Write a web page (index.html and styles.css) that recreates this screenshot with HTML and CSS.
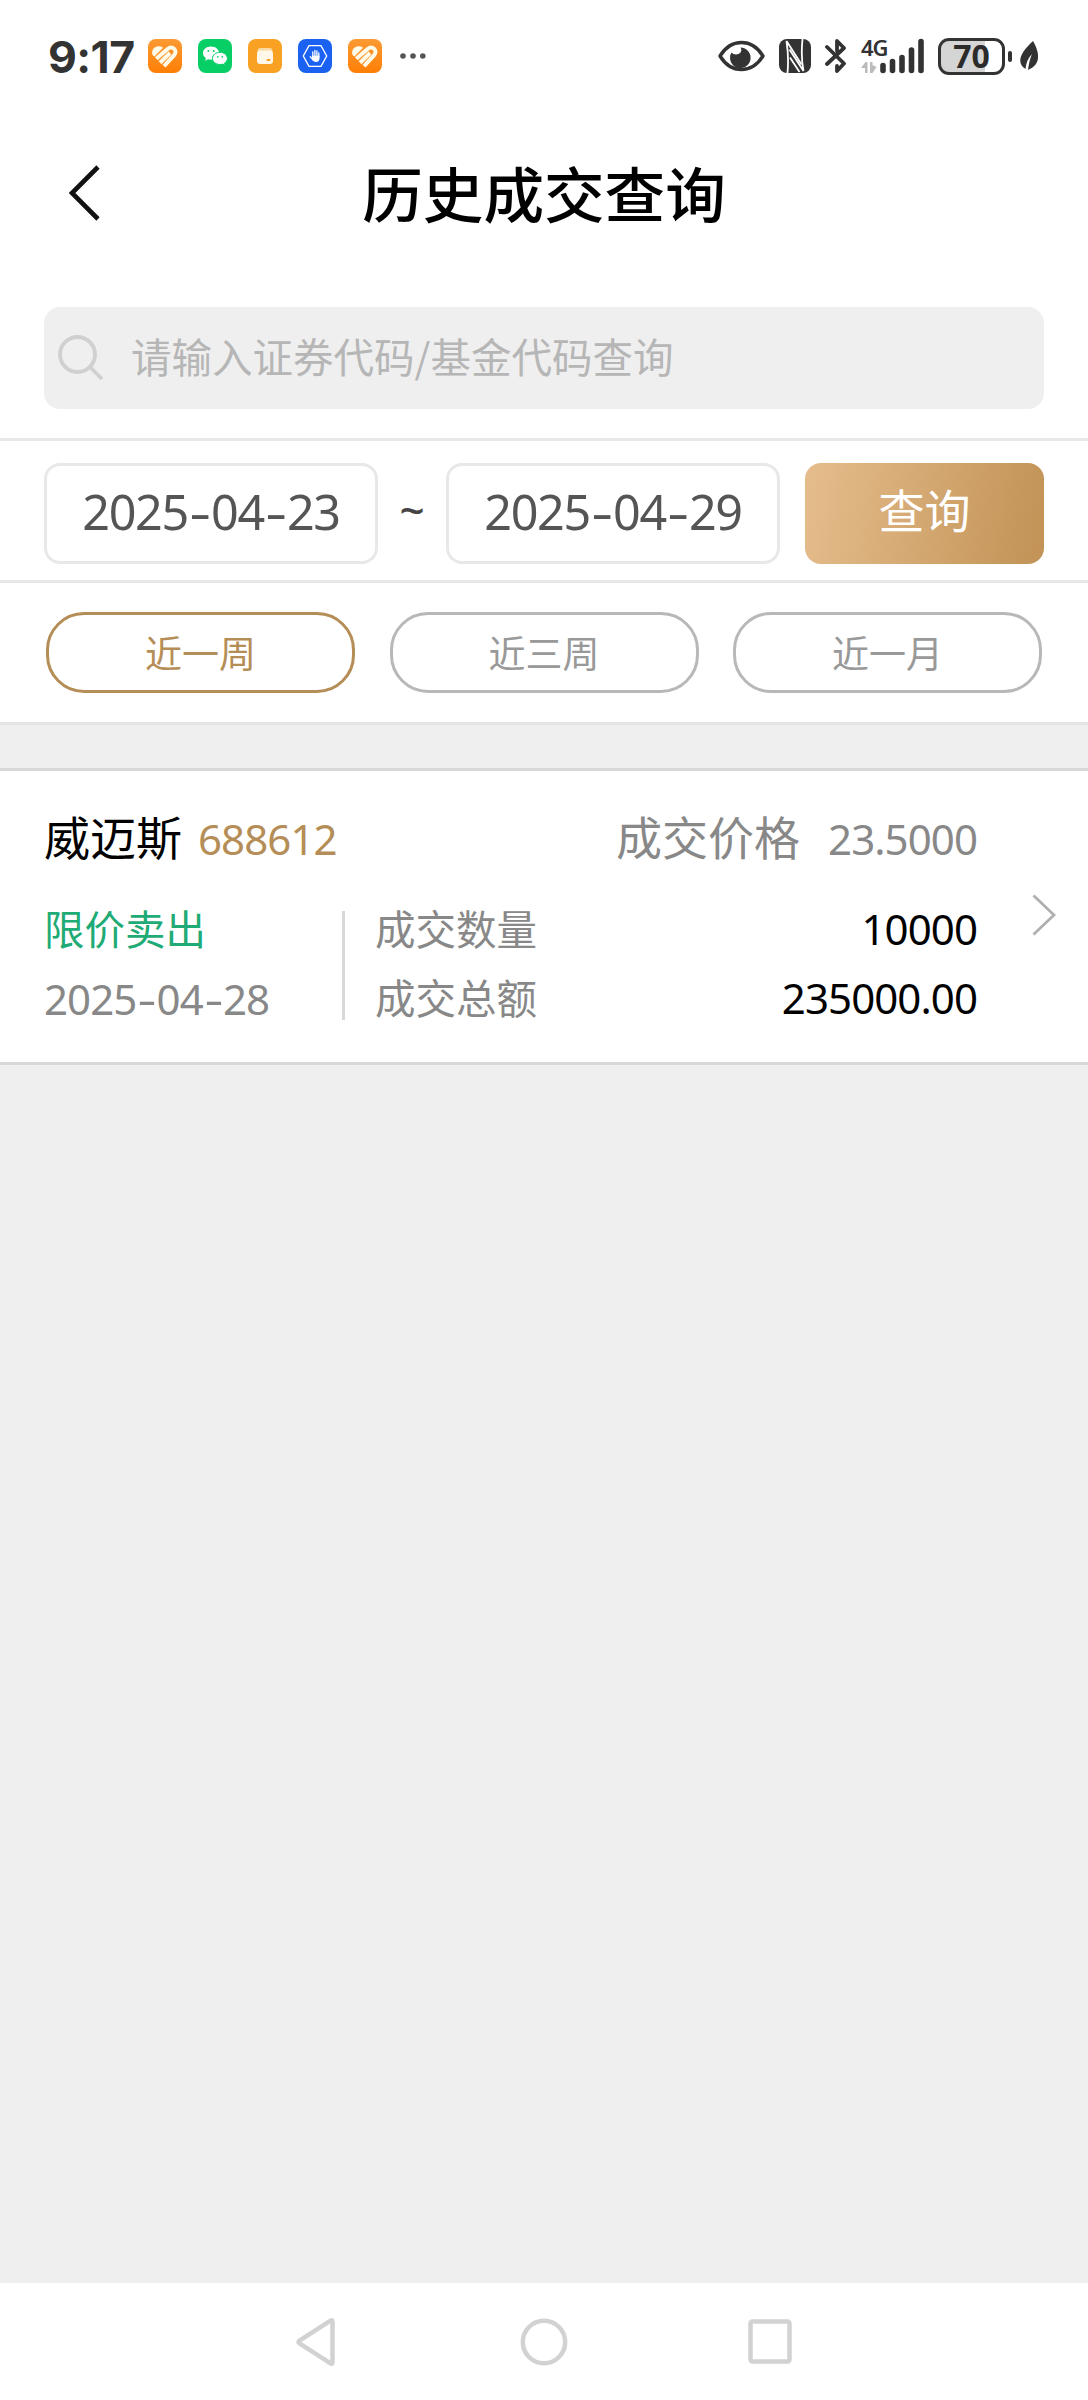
FILE: index.html
```html
<!DOCTYPE html>
<html lang="zh-CN">
<head>
<meta charset="utf-8">
<title>历史成交查询</title>
<link rel="stylesheet" href="styles.css">
</head>
<body>
<div class="status">
  <span class="clock">9:17</span>
  <div class="apps">
    <svg class="app" viewBox="0 0 34 34"><defs><linearGradient id="og" x1="0" y1="0" x2="0" y2="1"><stop offset="0" stop-color="#fb9a33"/><stop offset="1" stop-color="#fe7f05"/></linearGradient></defs><rect width="34" height="34" rx="8" fill="url(#og)"/><path d="M4.500 16C2.500 9.500 9 4.800 15 8.800L6.500 17.500Z" fill="#fffbe8"/><g fill="none" stroke="#fffbe8" stroke-width="4"><path d="M8.300 19.800L19.300 10.200C24.500 6 30.300 11.500 26 16.300L16 27.200"/><path d="M12 23.800L22 14"/></g></svg>
    <svg class="app" viewBox="0 0 34 34"><rect width="34" height="34" rx="8" fill="#07cf66"/><path d="M13 7.500c-4.600 0-8 2.900-8 6.600 0 2.100 1.100 3.900 2.900 5.100l-.8 2.600 3-1.500c1 .3 2 .4 3 .4 4.500 0 8-2.900 8-6.600s-3.500-6.600-8.100-6.600z" fill="#fff"/><path d="M22 13.300c-4.200 0-7.500 2.700-7.500 6.100s3.300 6.100 7.500 6.100c.9 0 1.800-.1 2.600-.4l2.600 1.300-.7-2.300c1.800-1.100 2.900-2.800 2.900-4.700 0-3.400-3.300-6.100-7.400-6.100z" fill="#fff" stroke="#07cf66" stroke-width="1"/><g fill="#07cf66"><circle cx="10.300" cy="12" r="1"/><circle cx="15.700" cy="12" r="1"/><circle cx="19.800" cy="17.800" r=".9"/><circle cx="24.300" cy="17.800" r=".9"/></g></svg>
    <svg class="app" viewBox="0 0 34 34"><rect width="34" height="34" rx="8" fill="#f8a123"/><path d="M9.500 12c0-2 1-3 3-3h9c2 0 3 1 3 3z" fill="#fcd9a0"/><rect x="9" y="11.500" width="16" height="13.500" rx="3" fill="#fff8e8"/><rect x="18.500" y="20" width="4" height="2" rx="1" fill="#f8a123"/></svg>
    <svg class="app" viewBox="0 0 34 34"><rect width="34" height="34" rx="8" fill="#1c62f2"/><path d="M11 6.700h12L28.700 17 23 27.300H11L5.300 17z" fill="none" stroke="#fff" stroke-width="1.300"/><path d="M14.800 18v-5M16.900 17v-5.500M18.900 17v-5M20.800 18v-4M12.300 17.800l2.700 3" stroke="#fff" stroke-width="1.300" stroke-linecap="round" fill="none"/><path d="M14.200 16.800h7.300v2.700c0 4.500-6 4.500-7.300 1z" fill="#fff"/></svg>
    <svg class="app" viewBox="0 0 34 34"><rect width="34" height="34" rx="8" fill="url(#og)"/><path d="M4.500 16C2.500 9.500 9 4.800 15 8.800L6.500 17.500Z" fill="#fffbe8"/><g fill="none" stroke="#fffbe8" stroke-width="4"><path d="M8.300 19.800L19.300 10.200C24.500 6 30.300 11.500 26 16.300L16 27.200"/><path d="M12 23.800L22 14"/></g></svg>
  </div>
  <svg class="dots" viewBox="0 0 26 6" fill="#555"><circle cx="3" cy="3" r="2.800"/><circle cx="13" cy="3" r="2.800"/><circle cx="22.800" cy="3" r="2.800"/></svg>
  <div class="signals">
    <svg class="eye" viewBox="0 0 47 32"><path d="M2 16C13-2 34-2 45 16 34 34 13 34 2 16z" fill="none" stroke="#333" stroke-width="3.400" stroke-linejoin="round"/><path d="M22.500 7.500a10.300 10.300 0 1 1-9 5c2 2.500 7 2.500 9 0 1.200-1.600 1-3.500 0-5z" fill="#333"/></svg>
    <svg class="nfc" viewBox="0 0 32 34"><rect width="32" height="34" rx="8" fill="#333"/><g fill="none" stroke="#fff" stroke-width="1.800"><path d="M8.500 34C9.500 24 9 12 7.500 2L22.500 25.500"/><path d="M10.500 10.500L24.500 32C22.500 22 22.500 10 23.500 0"/><path d="M11 18.500L20.500 33"/></g></svg>
    <svg class="bt" viewBox="0 0 22 36" fill="none" stroke="#333" stroke-width="3.800" stroke-linejoin="round" stroke-linecap="round"><path d="M2 9L19 25.500 12 33V28M12 13V3l7 7L2 26"/></svg>
    <div class="cell">
      <span class="net">4G</span>
      <svg viewBox="0 0 64 36"><g fill="#bbb"><path d="M0 30l4.500-6h2v11H4v-5zM9 24h2.500v3l4 2-4 6H9z"/></g><g stroke="#333" stroke-width="5.600" stroke-linecap="round"><path d="M22 27.500v5M31.500 23.500v9M41 19.500v13M50.500 12v20.500M60 3.500v29"/></g></svg>
    </div>
    <div class="battery"><span>70</span></div>
    <div class="nub"></div>
    <svg class="leaf" viewBox="0 0 18 30"><path d="M13 0C20 12 21 24 8 29 9 22 10 18 12 13 8 17 6 22 5.500 28-4 22 0 12 13 0z" fill="#333"/></svg>
  </div>
</div>
<header class="top">
  <svg class="back" viewBox="0 0 32 56"><path d="M29 2L3 28l26 26" fill="none" stroke="#111" stroke-width="4.600"/></svg>
  <h1>历史成交查询</h1>
</header>
<div class="search">
  <svg viewBox="0 0 46 46" fill="none" stroke="#d0d0d0" stroke-width="3.800"><circle cx="19.500" cy="19.500" r="17.500"/><path d="M32 32L44 44"/></svg>
  <span>请输入证券代码/基金代码查询</span>
</div>
<div class="range">
  <div class="date">2025<i>-</i>04<i>-</i>23</div>
  <span class="tilde">~</span>
  <div class="date">2025<i>-</i>04<i>-</i>29</div>
  <div class="go">查询</div>
</div>
<div class="periods">
  <div class="pill on">近一周</div>
  <div class="pill">近三周</div>
  <div class="pill">近一月</div>
</div>
<main>
  <div class="deal">
    <div class="info">
      <div class="head">
        <span class="name">威迈斯</span><span class="code">688612</span>
        <span class="plabel">成交价格</span><span class="price">23.5000</span>
      </div>
      <div class="body">
        <div class="kind"><span class="sell">限价卖出</span><span class="day">2025<i>-</i>04<i>-</i>28</span></div>
        <div class="nums">
          <div><span>成交数量</span><b>10000</b></div>
          <div><span>成交总额</span><b>235000.00</b></div>
        </div>
      </div>
    </div>
    <svg class="more" viewBox="0 0 24 42"><path d="M1.500 1.500L22 21 1.500 40.500" fill="none" stroke="#b0b0b0" stroke-width="2.800"/></svg>
  </div>
</main>
<nav>
  <svg viewBox="0 0 48 48"><path d="M38.500 3.500v41q0 2-2 .8L5.500 25.500q-2-1.500 0-3L36.500 2.700q2-1.200 2 .8z"/></svg>
  <svg viewBox="0 0 48 48"><circle cx="24" cy="24" r="21.200"/></svg>
  <svg viewBox="0 0 48 48"><rect x="4.500" y="3.500" width="39" height="40" rx="2"/></svg>
</nav>
</body>
</html>
```
FILE: styles.css
```css
* { box-sizing: border-box; }
body {
  margin: 0;
  width: 1088px;
  height: 2400px;
  display: flex;
  flex-direction: column;
  background: #fff;
  font-family: "Noto Sans CJK SC", sans-serif;
  color: #000;
  overflow: hidden;
}
svg { display: block; flex: none; }
i { font-style: normal; }

.status {
  height: 112px;
  display: flex;
  align-items: center;
  padding-left: 48px;
}
.clock {
  width: 100px;
  padding-top: 2px;
  font: 700 44.500px/44px Inter, sans-serif;
  letter-spacing: -.6px;
  color: #333;
}
.apps { display: flex; gap: 16px; }
.app { width: 34px; height: 34px; }
.dots { width: 26px; height: 6px; margin-left: 18px; }
.signals { display: flex; align-items: center; margin-left: 292px; }
.eye { width: 47px; height: 32px; }
.nfc { width: 32px; height: 34px; margin-left: 14px; }
.bt { width: 22px; height: 36px; margin-left: 14px; }
.cell { width: 64px; height: 36px; margin-left: 14px; position: relative; }
.cell svg { width: 64px; height: 36px; }
.net {
  position: absolute;
  left: 0;
  top: -1px;
  font: 600 22px/20px "Noto Sans", sans-serif;
  letter-spacing: -1px;
  color: #333;
}
.battery {
  width: 67px;
  height: 37px;
  margin-left: 13px;
  border: 3px solid #333;
  border-radius: 11px;
  background: linear-gradient(90deg, #d5d5d5 44px, #fff 44px);
  font: 700 32px/29px "Noto Sans", sans-serif;
  text-align: center;
  color: #2b2b2b;
}
.nub { width: 4px; height: 11px; margin-left: 3px; border-radius: 2px; background: #333; }
.leaf { width: 18px; height: 30px; margin-left: 8px; }

.top {
  height: 195px;
  padding: 51px 69px 0;
  display: grid;
  grid-template-columns: 32px 1fr 32px;
  align-items: start;
}
.back { width: 32px; height: 56px; margin-top: 2px; }
h1 { margin: -1px 0 0; font-weight: 500; font-size: 60.600px; line-height: 60px; text-align: center; }

.search {
  height: 102px;
  margin: 0 44px 29px;
  padding-left: 14px;
  border-radius: 16px;
  background: #efefef;
  display: flex;
  align-items: center;
  gap: 27px;
}
.search svg { width: 46px; height: 46px; }
.search span { font-size: 40.500px; line-height: 60px; padding-bottom: 4px; color: #b6b6b6; }

.range {
  height: 145px;
  border-top: 3px solid #e8e8e8;
  border-bottom: 3px solid #e8e8e8;
  padding: 22px 44px 0;
  display: flex;
}
.date {
  width: 334px;
  height: 101px;
  border: 3px solid #e8e8e8;
  border-radius: 16px;
  text-align: center;
  font: 400 48.500px/91px "Noto Sans", sans-serif;
  letter-spacing: -.027em;
  color: #555;
}
.date i, .day i { display: inline-block; margin: 0 .09em; transform: scaleX(1.4); }
.tilde { width: 68px; text-align: center; font: 500 44px/93px "Noto Sans", sans-serif; color: #444; }
.go {
  width: 239px;
  height: 101px;
  margin-left: auto;
  border-radius: 16px;
  background: linear-gradient(100deg, #e5bd8c, #c29256);
  color: #fff;
  text-align: center;
  font-size: 46px;
  line-height: 91px;
}

.periods {
  height: 142px;
  border-bottom: 3px solid #e5e5e5;
  padding: 29px 46px 0;
  display: flex;
  justify-content: space-between;
}
.pill {
  width: 309px;
  height: 81px;
  border: 3px solid #b8b8b8;
  border-radius: 38px;
  text-align: center;
  font-size: 37px;
  line-height: 74px;
  color: #999;
}
.pill.on { border-color: #b58e57; color: #b58e57; }

main { flex: 1; padding-top: 43px; background: #efefef; }
.deal {
  height: 297px;
  border-top: 3px solid #d8d8d8;
  border-bottom: 3px solid #d8d8d8;
  background: #fff;
  padding: 34px 32px 0 44px;
  display: flex;
}
.info { width: 933px; }
.head { display: flex; align-items: baseline; height: 106px; line-height: 60px; }
.name, .plabel { font-size: 46px; }
.code, .price, .day, .nums b {
  font-family: "Noto Sans", sans-serif;
  font-size: 42px;
  font-weight: 400;
  letter-spacing: -.022em;
}
.code { margin-left: 16px; color: #b58e57; }
.plabel { margin-left: auto; color: #888; }
.price { margin-left: 28px; color: #888; }
.body { display: flex; height: 109px; }
.kind { width: 301px; border-right: 3px solid #d8d8d8; display: flex; flex-direction: column; gap: 11px; margin-right: 30px; }
.sell, .day, .nums div { line-height: 60px; }
.kind, .nums { color: #888; font-size: 40.500px; }
.sell { color: #1fab75; }
.kind .sell, .nums div:first-child { margin-top: -13px; }
.nums { flex: 1; display: flex; flex-direction: column; gap: 9px; }
.nums div { display: flex; justify-content: space-between; align-items: baseline; height: 60px; }
.nums b { color: #000; }
.more { width: 24px; height: 42px; margin: 89px 0 0 auto; }

nav { height: 117px; background: #fff; display: flex; justify-content: center; gap: 178px; padding-top: 35px; }
nav svg { width: 48px; height: 48px; fill: none; stroke: #d2d2d2; stroke-width: 4.500; }
```
